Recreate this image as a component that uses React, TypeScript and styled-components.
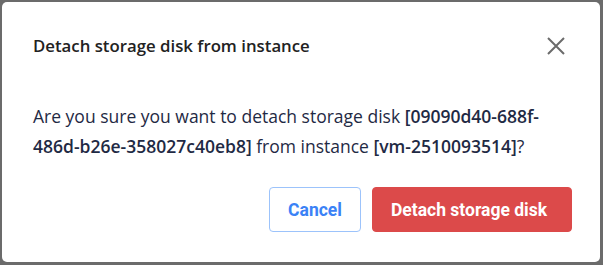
import React from "react";
import styled, { createGlobalStyle } from "styled-components";

const Global = createGlobalStyle`
  html, body { margin: 0; padding: 0; background: #6b6b6b; }
  * { box-sizing: border-box; }
`;

const Overlay = styled.div`
  width: 603px;
  height: 265px;
  padding: 2px 3px 3px 2px;
  background: #6b6b6b;
`;

const Dialog = styled.div`
  width: 100%;
  height: 100%;
  background: #ffffff;
  border-radius: 5px;
  padding: 32px 28px 30px 31px;
  display: flex;
  flex-direction: column;
  font-family: "Open Sans", sans-serif;
  color: #1f2a44;
`;

const Header = styled.div`
  display: flex;
  align-items: center;
  justify-content: space-between;
  height: 24px;
`;

const Title = styled.h2`
  margin: 0;
  font-size: 16.8px;
  font-weight: 600;
  line-height: 24px;
  color: #222;
`;

const CloseButton = styled.button`
  border: none;
  background: none;
  padding: 0;
  margin-right: 7px;
  width: 18px;
  height: 18px;
  display: flex;
  cursor: pointer;
`;

const Body = styled.p`
  margin: 43px 0 0 0;
  font-size: 17.5px;
  line-height: 30px;
  color: #1f2a44;
`;

const Strong = styled.strong`
  font-weight: 600;
`;

const Footer = styled.div`
  margin-top: auto;
  display: flex;
  justify-content: flex-end;
  gap: 11px;
`;

const Button = styled.button<{ $variant: "ghost" | "danger" }>`
  height: 45px;
  border-radius: 4px;
  font-family: Roboto, sans-serif;
  font-size: 17.5px;
  font-weight: 700;
  cursor: pointer;
  ${(p) =>
    p.$variant === "danger"
      ? `background: #dc4a4a; color: #ffffff; border: 1px solid #dc4a4a; width: 200px; padding: 0 6px 0 0;`
      : `background: #ffffff; color: #3b82f6; border: 1px solid #9cc3fb; width: 92px; padding: 0;`}
`;

export default function App() {
  return (
    <>
      <Global />
      <Overlay>
        <Dialog>
          <Header>
            <Title>Detach storage disk from instance</Title>
            <CloseButton aria-label="Close">
              <svg width="18" height="18" viewBox="0 0 18 18">
                <path d="M1 1L17 17M17 1L1 17" stroke="#6b6b6b" strokeWidth="2" />
              </svg>
            </CloseButton>
          </Header>
          <Body>
            Are you sure you want to detach storage disk{" "}
            <Strong>[09090d40-688f-486d-b26e-358027c40eb8]</Strong> from instance{" "}
            <Strong>[vm-2510093514]</Strong>?
          </Body>
          <Footer>
            <Button $variant="ghost">Cancel</Button>
            <Button $variant="danger">Detach storage disk</Button>
          </Footer>
        </Dialog>
      </Overlay>
    </>
  );
}
